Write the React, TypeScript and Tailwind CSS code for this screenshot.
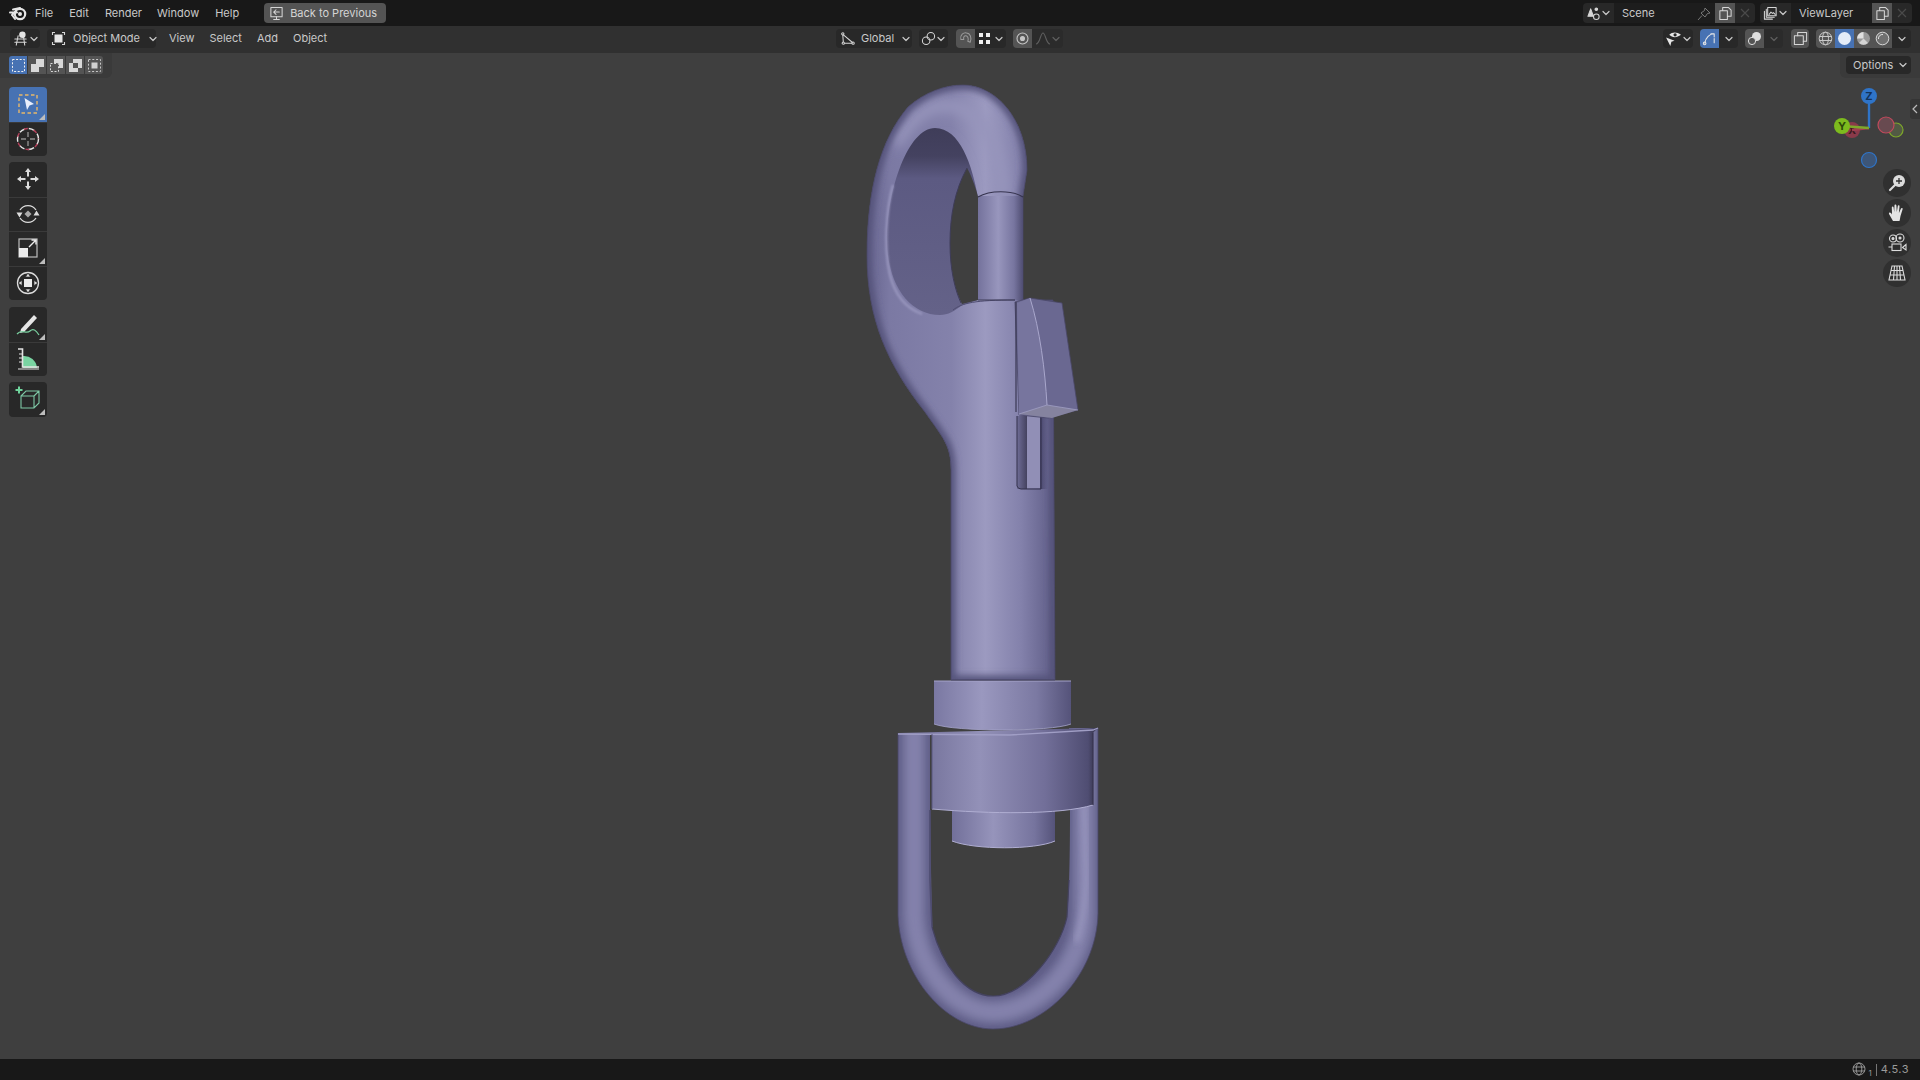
import React from "react";

const Chev = ({ c = "#c8c8c8", className = "" }: { c?: string; className?: string }) => (
  <svg width="10" height="10" viewBox="0 0 10 10" className={className}>
    <path d="M2 3.5 L5 6.5 L8 3.5" fill="none" stroke={c} strokeWidth="1.2" strokeLinecap="round" strokeLinejoin="round" />
  </svg>
);

const Corner = () => (
  <svg width="6" height="6" viewBox="0 0 6 6" className="absolute right-[2px] bottom-[2px]">
    <path d="M6 0 V6 H0 Z" fill="#bdbdbd" />
  </svg>
);

const Ico = ({ children, s = 18, v = 18 }: { children: React.ReactNode; s?: number; v?: number }) => (
  <svg width={s} height={s} viewBox={`0 0 ${v} ${v}`} fill="none" stroke="#d6d6d6" strokeWidth="1.1" strokeLinecap="round" strokeLinejoin="round">
    {children}
  </svg>
);

const Menu = ({ t, className = "" }: { t: string; className?: string }) => (
  <span className={`text-[#c9c9c9] whitespace-nowrap ${className}`}>{t}</span>
);

const ToolBtn = ({ children, active, corner, top, bottom }: { children: React.ReactNode; active?: boolean; corner?: boolean; top?: boolean; bottom?: boolean }) => (
  <div className={`relative h-[34.5px] w-[38px] pb-px flex items-center justify-center ${active ? "bg-[#4772b3]" : "bg-[#282828]"} ${top ? "rounded-t-[4px]" : "border-t border-[#3a3a3a]"} ${bottom ? "rounded-b-[4px]" : ""}`}>
    {children}
    {corner && <Corner />}
  </div>
);

const NavBtn = ({ children }: { children: React.ReactNode }) => (
  <div className="w-[28px] h-[28px] rounded-full bg-[#303030] flex items-center justify-center">{children}</div>
);

const SelMode = ({ active, children }: { active?: boolean; children: React.ReactNode }) => (
  <div className={`w-[18px] h-[18px] flex items-center justify-center ${active ? "bg-[#4772b3] rounded-l-[3px]" : "bg-[#545454]"}`}>{children}</div>
);

const HOOK =
  "M951 680 L951 470 C951 445 943 438 925 412 C888 365 867 320 867 255 C867 190 880 140 908 107 C925 92 945 85 963 85 C995 85 1027 118 1027 170 L1023 196 L1023 300 L1053 300 L1055 680 Z";
const RING =
  "M898 733 L898 915 C900 975 945 1029 993 1029 C1045 1029 1097 975 1098 913 L1098 728 L1069 728 L1070 810 C1070 870 1069 895 1067 917 C1060 950 1025 996 993 996 C965 996 942 965 932 927 L930 810 L930 733 Z";
const RING_C = "M914 720 L914 915 C916 968 955 1012 993 1012 C1035 1012 1083 968 1084 913 L1084 720";

function Model() {
  return (
    <svg className="absolute inset-0 w-full h-full" viewBox="0 53 1920 1006">
      <defs>
        <linearGradient id="body" gradientUnits="userSpaceOnUse" x1="867" y1="0" x2="1055" y2="0">
          <stop offset="0" stopColor="#66648e" />
          <stop offset="0.12" stopColor="#7b79a3" />
          <stop offset="0.45" stopColor="#8482ab" />
          <stop offset="0.63" stopColor="#9c9ac0" />
          <stop offset="0.82" stopColor="#8381ab" />
          <stop offset="0.96" stopColor="#66648e" />
          <stop offset="1" stopColor="#55537a" />
        </linearGradient>
        <linearGradient id="rod" gradientUnits="userSpaceOnUse" x1="978" y1="0" x2="1023" y2="0">
          <stop offset="0" stopColor="#74729c" />
          <stop offset="0.45" stopColor="#9896bd" />
          <stop offset="0.8" stopColor="#77759f" />
          <stop offset="1" stopColor="#4f4d72" />
        </linearGradient>
        <linearGradient id="inner" gradientUnits="userSpaceOnUse" x1="0" y1="128" x2="0" y2="315">
          <stop offset="0" stopColor="#3f3d59" />
          <stop offset="0.15" stopColor="#444260" />
          <stop offset="0.27" stopColor="#5c5a82" />
          <stop offset="1" stopColor="#646288" />
        </linearGradient>
        <linearGradient id="collar" gradientUnits="userSpaceOnUse" x1="934" y1="0" x2="1071" y2="0">
          <stop offset="0" stopColor="#7a78a2" />
          <stop offset="0.35" stopColor="#9a98bf" />
          <stop offset="0.75" stopColor="#7b79a2" />
          <stop offset="1" stopColor="#55537a" />
        </linearGradient>
        <linearGradient id="plate" gradientUnits="userSpaceOnUse" x1="932" y1="0" x2="1093" y2="0">
          <stop offset="0" stopColor="#79779f" />
          <stop offset="0.3" stopColor="#9391b8" />
          <stop offset="0.7" stopColor="#726f99" />
          <stop offset="0.97" stopColor="#4f4d72" />
          <stop offset="1" stopColor="#3f3d5a" />
        </linearGradient>
        <linearGradient id="lowcyl" gradientUnits="userSpaceOnUse" x1="952" y1="0" x2="1055" y2="0">
          <stop offset="0" stopColor="#72709a" />
          <stop offset="0.4" stopColor="#9694bb" />
          <stop offset="0.8" stopColor="#76749e" />
          <stop offset="1" stopColor="#55537a" />
        </linearGradient>
        <linearGradient id="slotL" gradientUnits="userSpaceOnUse" x1="1017" y1="0" x2="1027" y2="0">
          <stop offset="0" stopColor="#6f6d97" />
          <stop offset="1" stopColor="#44425f" />
        </linearGradient>
        <linearGradient id="slotR" gradientUnits="userSpaceOnUse" x1="1040" y1="0" x2="1048" y2="0">
          <stop offset="0" stopColor="#46446a" />
          <stop offset="1" stopColor="#46446a" stopOpacity="0" />
        </linearGradient>
        <filter id="b3" x="-30%" y="-30%" width="160%" height="160%"><feGaussianBlur stdDeviation="3" /></filter>
        <filter id="b6" x="-30%" y="-30%" width="160%" height="160%"><feGaussianBlur stdDeviation="6" /></filter>
        <filter id="b1" x="-30%" y="-30%" width="160%" height="160%"><feGaussianBlur stdDeviation="1" /></filter>
        <clipPath id="hookClip"><path d={HOOK} /></clipPath>
        <clipPath id="ringClip"><path d={RING} /></clipPath>
      </defs>

      {/* hook and shaft */}
      <path d={HOOK} fill="url(#body)" />
      <g clipPath="url(#hookClip)">
        <path d="M1003 196 C1002 150 985 118 960 108 C935 100 915 112 895 145" fill="none" stroke="#9694bb" strokeWidth="13" filter="url(#b6)" />
        <path d={HOOK} fill="none" stroke="#55537a" strokeWidth="9" filter="url(#b3)" />
        <path d="M951 450 L951 682" fill="none" stroke="#6a6892" strokeWidth="14" filter="url(#b6)" />
      </g>
      <path d={HOOK} fill="none" stroke="#4a4868" strokeWidth="0.8" />

      {/* inside of the eye */}
      <path d="M935 128 C908 128 887 190 887 240 C887 285 910 315 940 315 C948 315 955 311 962 305 L978 300 L978 197 C972 165 960 128 935 128 Z" fill="url(#inner)" />
      <path d="M893 185 C886 210 884 250 890 275 C895 295 905 308 922 314" fill="none" stroke="#a5a3c9" strokeWidth="2.2" opacity="0.75" filter="url(#b1)" />
      <path d="M967 168 C955 190 950 215 950 243 C950 270 955 290 962 304 L978 300 L978 197 C975 185 971 175 967 168 Z" fill="#3f3f3f" />
      <path d="M967 168 C955 190 950 215 950 243 C950 270 955 290 961 303" fill="none" stroke="#3e3c58" strokeWidth="1" />
      <rect x="978" y="196" width="45" height="104" fill="url(#rod)" />
      <path d="M978 197 C990 190 1012 190 1023 197" fill="none" stroke="#35334e" strokeWidth="1.1" />
      <path d="M953 310 C962 303 975 300 1015 300" fill="none" stroke="#4e4c70" strokeWidth="1" />
      <path d="M978 300 L1015 300" stroke="#3e3c58" strokeWidth="1" />

      {/* slot under latch */}
      <rect x="1017" y="416" width="10" height="73" fill="url(#slotL)" />
      <rect x="1027" y="416" width="13" height="72" fill="#918fb6" />
      <rect x="1040" y="416" width="8" height="73" fill="url(#slotR)" />
      <path d="M1017 416 L1017 486 Q1018 489 1021 489 L1041 489 L1041 416" fill="none" stroke="#33314b" strokeWidth="1" />

      {/* latch */}
      <path d="M1015 302 L1030 298 L1062 303 L1078 410 L1048 418 L1019 415 Z" fill="#6a6891" stroke="#4a4868" strokeWidth="0.8" />
      <path d="M1017 303 L1030 298 C1040 330 1045 370 1047 405 L1019 415 Z" fill="#77759e" />
      <path d="M1030 298 C1040 330 1045 370 1047 405" fill="none" stroke="#a9a7cc" strokeWidth="1" />
      <path d="M1019 414 L1047 405 L1078 410 L1052 418 Z" fill="#85839f" />
      <path d="M1019 414 L1047 405 L1078 410" fill="none" stroke="#a09ec4" strokeWidth="0.8" />
      <path d="M1016 302 L1016 412" stroke="#3a3853" strokeWidth="1.2" />

      {/* U ring */}
      <path d={RING} fill="#5f5d87" />
      <g clipPath="url(#ringClip)">
        <path d={RING_C} fill="none" stroke="#716f99" strokeWidth="26" filter="url(#b3)" />
        <path d={RING_C} fill="none" stroke="#8381ab" strokeWidth="15" filter="url(#b3)" />
        <path d="M908 720 L908 905" fill="none" stroke="#a09ec5" strokeWidth="5" filter="url(#b3)" />
        <path d="M1084 800 L1086 880 C1085 905 1082 925 1076 942" fill="none" stroke="#a09ec5" strokeWidth="5" opacity="0.85" filter="url(#b3)" />
      </g>
      <path d="M932 927 C942 965 965 996 993 996 C1025 996 1060 950 1067 917 L1069 880" fill="none" stroke="#44425f" strokeWidth="1.2" />
      <path d="M930 810 L930 880 L932 927" fill="none" stroke="#4e4c70" strokeWidth="1.6" />
      <path d="M898 733 L898 915 C900 975 945 1029 993 1029 C1045 1029 1097 975 1098 913 L1098 728" fill="none" stroke="#4a4868" strokeWidth="0.8" />

      {/* lower cylinder */}
      <path d="M952 808 L1055 808 L1055 841 C1035 850 975 850 952 841 Z" fill="url(#lowcyl)" />
      <path d="M952 841 C975 850 1035 850 1055 841" fill="none" stroke="#b0aed2" strokeWidth="1" />

      {/* plate */}
      <path d="M898 733 L1098 728 C1092 733 1094 733 1093 733 L1093 805 C1060 815 990 814 932 809 L932 734 Z" fill="url(#plate)" />
      <path d="M898 734 L1010 735 L1093 730 L1098 728" fill="none" stroke="#a09ec5" strokeWidth="1.3" />
      <path d="M932 809 C990 814 1060 815 1093 805" fill="none" stroke="#b0aed2" strokeWidth="1" />
      <path d="M932 734 L932 809" stroke="#5a5880" strokeWidth="1" />
      <path d="M1093 733 L1093 805" stroke="#37354f" strokeWidth="1.2" />

      {/* collar */}
      <path d="M934 681 L1071 681 L1071 724 C1050 732 955 732 934 724 Z" fill="url(#collar)" />
      <path d="M934 681 L1071 681" stroke="#a5a3c9" strokeWidth="1" />
      <path d="M934 724 C955 732 1050 732 1071 724" fill="none" stroke="#a5a3c9" strokeWidth="0.8" />
      <path d="M951 680 L1055 680" stroke="#4a4868" strokeWidth="1" />
    </svg>
  );
}

export default function App() {
  return (
    <div className="w-[1920px] h-[1080px] flex flex-col overflow-hidden bg-[#3f3f3f] text-[11px] leading-none" style={{ fontFamily: "Inter, 'Noto Sans', sans-serif" }}>
      {/* Top bar */}
      <div className="h-[26px] shrink-0 bg-[#181818] flex items-center pl-[9px] pr-[8px]">
        <svg width="19" height="16" viewBox="0 0 19 16" className="mr-[7px]">
          <circle cx="11" cy="9" r="5.2" fill="none" stroke="#e6e6e6" strokeWidth="2.2" />
          <circle cx="11" cy="9" r="2" fill="#e6e6e6" />
          <path d="M1 7.5 L8 7.5 M4 4.5 L11 3 M3 10 L7 6 M3.5 10.5 L6 14" stroke="#e6e6e6" strokeWidth="2" strokeLinecap="round" />
        </svg>
        <Menu t="File" className="pt-px" />
        <Menu t="Edit" className="ml-[16px] pt-px" />
        <Menu t="Render" className="ml-[16px] pt-px" />
        <Menu t="Window" className="ml-[15px] pt-px" />
        <Menu t="Help" className="ml-[16px] pt-px" />
        <div className="ml-[25px] h-[20px] w-[122px] bg-[#545454] rounded-[4px] flex items-center pl-[5px] gap-[6px] text-[#d4d4d4]">
          <Ico s={15} v={16}>
            <rect x="2" y="1.5" width="12" height="10" />
            <path d="M5 14.5 H11 M8 11.5 V14.5 M11 6.5 H5 M7.5 4 L5 6.5 L7.5 9" />
          </Ico>
          <span className="whitespace-nowrap pt-px">Back to Previous</span>
        </div>
        <div className="flex-1" />
        {/* Scene */}
        <div className="h-[20px] w-[172px] rounded-[4px] flex overflow-hidden">
          <div className="w-[31px] bg-[#282828] flex items-center justify-center">
            <Ico s={15} v={16}>
              <path d="M5 3 L8 11 H2 Z" fill="#d6d6d6" />
              <circle cx="11" cy="3.5" r="1.4" fill="#d6d6d6" />
              <circle cx="11" cy="11.5" r="3" />
            </Ico>
            <Chev />
          </div>
          <div className="flex-1 bg-[#1d1d1d] flex items-center pl-[8px] pt-px text-[#c9c9c9] relative">
            Scene
            <svg width="14" height="14" viewBox="0 0 14 14" className="absolute right-[4px]" fill="none" stroke="#777" strokeWidth="1">
              <path d="M8 1 L13 6 L10.5 6.5 L8 10 L4 6 L7.5 3.5 Z M5 8.5 L1 13" />
            </svg>
          </div>
          <div className="w-[20px] bg-[#545454] flex items-center justify-center">
            <Ico s={15} v={16}><path d="M5 4 V1.5 H11 L14 4.5 V11 H10 M2 5 H10 V14.5 H2 Z" /></Ico>
          </div>
          <div className="w-[20px] bg-[#282828] flex items-center justify-center">
            <svg width="10" height="10" viewBox="0 0 10 10"><path d="M1 1 L9 9 M9 1 L1 9" stroke="#4a4a4a" strokeWidth="1.2" /></svg>
          </div>
        </div>
        {/* ViewLayer */}
        <div className="ml-[5px] h-[20px] w-[152px] rounded-[4px] flex overflow-hidden">
          <div className="w-[31px] bg-[#282828] flex items-center justify-center">
            <Ico s={15} v={16}>
              <rect x="5" y="1.5" width="9" height="9" />
              <path d="M3.5 3.5 V12 H12 M1.5 5.5 V14 H10 M6.5 9 L8.5 6.5 L10 8 L11 7 L13 9" />
            </Ico>
            <Chev />
          </div>
          <div className="flex-1 bg-[#1d1d1d] flex items-center pl-[8px] pt-px text-[#c9c9c9]">ViewLayer</div>
          <div className="w-[20px] bg-[#545454] flex items-center justify-center">
            <Ico s={15} v={16}><path d="M5 4 V1.5 H11 L14 4.5 V11 H10 M2 5 H10 V14.5 H2 Z" /></Ico>
          </div>
          <div className="w-[20px] bg-[#282828] flex items-center justify-center">
            <svg width="10" height="10" viewBox="0 0 10 10"><path d="M1 1 L9 9 M9 1 L1 9" stroke="#4a4a4a" strokeWidth="1.2" /></svg>
          </div>
        </div>
      </div>

      {/* Header */}
      <div className="h-[27px] shrink-0 bg-[#303030] flex items-start pt-[3px] pl-[10px] pr-[9px] relative">
        <div className="w-[30px] h-[19px] bg-[#282828] rounded-[4px] flex items-center justify-center">
          <Ico s={17} v={18}>
            <path d="M3 9.5 H15 M3 13 H15 M6.5 6 L4.5 16 M12 6 L13.5 16" />
            <circle cx="11" cy="5" r="3.4" fill="#e4e4e4" stroke="none" />
          </Ico>
          <Chev />
        </div>
        <div className="ml-[7px] w-[109px] h-[19px] bg-[#282828] rounded-[4px] flex items-center pl-[4px] text-[#c9c9c9]">
          <svg width="15" height="15" viewBox="0 0 15 15" fill="none" stroke="#d6d6d6" strokeWidth="1.1" className="shrink-0">
            <path d="M1.5 4 V1.5 H4 M11 1.5 H13.5 V4 M13.5 11 V13.5 H11 M4 13.5 H1.5 V11" />
            <rect x="3.5" y="3.5" width="8" height="8" fill="#e6e6e6" stroke="none" />
          </svg>
          <span className="ml-[7px] whitespace-nowrap">Object Mode</span>
          <Chev className="ml-[8px] shrink-0" />
        </div>
        <Menu t="View" className="ml-[13px] mt-[4px]" />
        <Menu t="Select" className="ml-[15px] mt-[4px]" />
        <Menu t="Add" className="ml-[15px] mt-[4px]" />
        <Menu t="Object" className="ml-[15px] mt-[4px]" />

        {/* center group overlays the header's middle */}
        <div className="absolute left-[836px] top-[3px] flex items-center h-[19px]">
          <div className="w-[76px] h-[19px] bg-[#282828] rounded-[4px] flex items-center pl-[4px] text-[#c9c9c9]">
            <Ico s={15} v={16}>
              <circle cx="3" cy="3" r="1.2" />
              <circle cx="3.5" cy="13" r="1.2" />
              <circle cx="14" cy="13" r="1.2" />
              <path d="M3 4.5 L3.5 11.5 M5 13 H12.5 M4 4.5 L13 12" />
            </Ico>
            <span className="ml-[6px]">Global</span>
            <Chev className="ml-[7px]" />
          </div>
          <div className="ml-[7px] w-[29px] h-[19px] bg-[#282828] rounded-[4px] flex items-center justify-center">
            <Ico s={15} v={16}>
              <circle cx="5.5" cy="10.5" r="4" />
              <circle cx="10.5" cy="5.5" r="4" />
            </Ico>
            <Chev />
          </div>
          <div className="ml-[8px] w-[19px] h-[19px] bg-[#545454] rounded-l-[4px] flex items-center justify-center">
            <Ico s={15} v={16}><path d="M3 9 C2 4 6 1.5 9 2 C13 2.5 15 7 13 12 L10.5 11 C11.5 8 10.5 5.5 8.5 5 C6.5 4.8 5.5 7 6.2 9 Z" stroke="#9a9a9a" /></Ico>
          </div>
          <div className="w-[31px] h-[19px] bg-[#282828] rounded-r-[4px] flex items-center pl-[2px] gap-[2px]">
            <svg width="15" height="15" viewBox="0 0 15 15" fill="#f0f0f0">
              <rect x="2" y="2" width="4" height="4" /><rect x="9" y="2" width="4" height="4" />
              <rect x="2" y="9" width="4" height="4" /><rect x="9" y="9" width="4" height="4" />
            </svg>
            <Chev />
          </div>
          <div className="ml-[7px] w-[19px] h-[19px] bg-[#545454] rounded-l-[4px] flex items-center justify-center">
            <svg width="15" height="15" viewBox="0 0 15 15" fill="none" stroke="#c4c4c4" strokeWidth="1.1">
              <circle cx="7.5" cy="7.5" r="5.5" /><circle cx="7.5" cy="7.5" r="2" fill="#c4c4c4" />
            </svg>
          </div>
          <div className="w-[31px] h-[19px] bg-[#2b2b2b] rounded-r-[4px] flex items-center pl-[3px]">
            <svg width="16" height="15" viewBox="0 0 16 15" fill="none" stroke="#5e5e5e" strokeWidth="1.1">
              <path d="M1 13 C5 13 5.5 2 8 2 C10.5 2 11 13 15 13" />
            </svg>
            <Chev c="#5e5e5e" />
          </div>
        </div>

        <div className="flex-1" />
        <div className="w-[30px] h-[19px] bg-[#282828] rounded-[4px] flex items-center justify-center">
          <svg width="17" height="17" viewBox="0 0 16 16">
            <path d="M4 4.5 C7 1.5 11 1.5 15 4.5 C11 7.5 7 7.5 4 4.5 Z" fill="#e6e6e6" />
            <circle cx="9.5" cy="4.5" r="1.5" fill="#282828" />
            <path d="M1 7 L9 10 L6 11 L5 15 Z" fill="#e6e6e6" />
          </svg>
          <Chev />
        </div>
        <div className="ml-[7px] flex h-[19px] w-[38px] rounded-[4px] overflow-hidden">
          <div className="w-[19px] bg-[#4772b3] flex items-center justify-center">
            <Ico s={15} v={16}>
              <path d="M3 13 C4 7 8 3 13 3 M13 3 H9.5 M13 3 V6.5 M13 8 V12.5" stroke="#e8e8e8" />
              <circle cx="2.8" cy="13.2" r="1.4" stroke="#e8e8e8" />
            </Ico>
          </div>
          <div className="flex-1 bg-[#282828] flex items-center justify-center"><Chev /></div>
        </div>
        <div className="ml-[7px] flex h-[19px] w-[38px] rounded-[4px] overflow-hidden">
          <div className="w-[19px] bg-[#545454] flex items-center justify-center">
            <svg width="15" height="15" viewBox="0 0 15 15">
              <circle cx="9.5" cy="5.5" r="4.5" fill="#e0e0e0" />
              <circle cx="5" cy="10" r="3.6" fill="#545454" stroke="#e0e0e0" strokeWidth="1" />
            </svg>
          </div>
          <div className="flex-1 bg-[#2b2b2b] flex items-center justify-center"><Chev c="#5e5e5e" /></div>
        </div>
        <div className="ml-[8px] w-[18px] h-[19px] bg-[#545454] rounded-[4px] flex items-center justify-center">
          <Ico s={15} v={16}>
            <rect x="1.5" y="5" width="9.5" height="9.5" fill="#545454" />
            <path d="M5 5 V1.5 H14.5 V11 H11" />
          </Ico>
        </div>
        <div className="ml-[7px] h-[19px] w-[95px] rounded-[4px] overflow-hidden flex">
          <div className="w-[19px] bg-[#545454] flex items-center justify-center">
            <svg width="15" height="15" viewBox="0 0 15 15" fill="none" stroke="#c8c8c8" strokeWidth="1">
              <circle cx="7.5" cy="7.5" r="6.3" /><ellipse cx="7.5" cy="7.5" rx="3" ry="6.3" /><path d="M1.2 5.5 H13.8 M1.2 9.5 H13.8" />
            </svg>
          </div>
          <div className="w-[19px] bg-[#4772b3] flex items-center justify-center">
            <svg width="15" height="15" viewBox="0 0 15 15"><circle cx="7.5" cy="7.5" r="6.5" fill="#e4ecf8" /></svg>
          </div>
          <div className="w-[19px] bg-[#545454] flex items-center justify-center">
            <svg width="15" height="15" viewBox="0 0 15 15">
              <circle cx="7.5" cy="7.5" r="6.5" fill="#9a9a9a" />
              <path d="M7.5 1 A6.5 6.5 0 0 0 1 7.5 H7.5 Z" fill="#e0e0e0" />
              <path d="M7.5 7.5 L12 12 A6.5 6.5 0 0 1 3 12 Z" fill="#d4d4d4" />
            </svg>
          </div>
          <div className="w-[19px] bg-[#545454] flex items-center justify-center">
            <svg width="15" height="15" viewBox="0 0 15 15" fill="none">
              <circle cx="7.5" cy="7.5" r="6.3" stroke="#d8d8d8" strokeWidth="1" fill="#707070" />
              <path d="M3.5 8 A4 4 0 0 1 8 3.5" stroke="#e6e6e6" strokeWidth="1" />
            </svg>
          </div>
          <div className="flex-1 bg-[#282828] flex items-center justify-center"><Chev /></div>
        </div>
      </div>

      {/* Viewport */}
      <div className="flex-1 relative bg-[#3f3f3f]">
        <Model />

        {/* Tool settings strip */}
        <div className="absolute left-0 top-0 w-[112px] h-[25px] bg-[#3a3a3a] rounded-br-[6px]" />
        <div className="absolute right-0 top-0 w-[80px] h-[25px] bg-[#3a3a3a] rounded-bl-[6px]" />
        <div className="absolute left-[9px] top-[3px] flex gap-px">
          <SelMode active>
            <svg width="15" height="15" viewBox="0 0 15 15"><rect x="1.5" y="1.5" width="12" height="12" fill="none" stroke="#f0f0f0" strokeDasharray="2 1.6" /></svg>
          </SelMode>
          <SelMode>
            <svg width="15" height="15" viewBox="0 0 15 15"><path d="M1 6 H6 V1 H14 V9 H9 V14 H1 Z" fill="#d8d8d8" /></svg>
          </SelMode>
          <SelMode>
            <svg width="15" height="15" viewBox="0 0 15 15"><path d="M5 1 H14 V10 H10 V5 H5 Z" fill="#d8d8d8" /><rect x="1.5" y="5.5" width="8" height="8" fill="none" stroke="#d8d8d8" strokeDasharray="2 1.6" /></svg>
          </SelMode>
          <SelMode>
            <svg width="15" height="15" viewBox="0 0 15 15"><path d="M5 1 H14 V10 H10 V5 H5 Z" fill="#d8d8d8" /><path d="M1 5 H10 V14 H1 Z M5 8 V10 H6 V8 Z" fill="#d8d8d8" /><rect x="5" y="5" width="5" height="5" fill="#545454" /></svg>
          </SelMode>
          <div className="w-[18px] h-[18px] bg-[#545454] rounded-r-[3px] flex items-center justify-center">
            <svg width="15" height="15" viewBox="0 0 15 15"><rect x="1.5" y="1.5" width="12" height="12" fill="none" stroke="#c8c8c8" strokeDasharray="2 1.8" /><rect x="4.5" y="4.5" width="6" height="6" fill="#d0d0d0" /></svg>
          </div>
        </div>
        <div className="absolute right-[9px] top-[3px] w-[65px] h-[18px] bg-[#282828] rounded-[4px] flex items-center pl-[7px] text-[#c9c9c9] gap-[5px]">
          <span className="pt-px">Options</span>
          <Chev />
        </div>

        {/* Toolbar */}
        <div className="absolute left-[9px] top-[34px] flex flex-col">
          <div className="flex flex-col">
            <ToolBtn active top corner>
              <svg width="26" height="26" viewBox="0 0 26 26">
                <rect x="4" y="4" width="18" height="18" fill="none" stroke="#e8b86a" strokeWidth="1.4" strokeDasharray="3.5 2.5" />
                <path d="M9.5 7 L19 13 L14.5 14.5 L12 19 Z" fill="#e8eefc" />
              </svg>
            </ToolBtn>
            <ToolBtn bottom>
              <svg width="26" height="26" viewBox="0 0 26 26" fill="none">
                <circle cx="13" cy="13" r="10.5" stroke="#e6e6e6" strokeWidth="1.4" strokeDasharray="6 4" />
                <circle cx="13" cy="13" r="10.5" stroke="#b4405a" strokeWidth="1.4" strokeDasharray="4 6" strokeDashoffset="5" />
                <path d="M13 6 V11 M13 15 V20 M6 13 H11 M15 13 H20" stroke="#8e8e8e" strokeWidth="1.4" />
              </svg>
            </ToolBtn>
          </div>
          <div className="flex flex-col mt-[6px]">
            <ToolBtn top>
              <svg width="26" height="26" viewBox="0 0 26 26" fill="#dcdcdc">
                <path d="M13 2 L16 6 H14 V10.5 H12 V6 H10 Z M13 24 L10 20 H12 V15.5 H14 V20 H16 Z M2 13 L6 10 V12 H10.5 V14 H6 V16 Z M24 13 L20 16 V14 H15.5 V12 H20 V10 Z" />
              </svg>
            </ToolBtn>
            <ToolBtn>
              <svg width="26" height="26" viewBox="0 0 26 26" fill="none">
                <path d="M5 9 A9.5 9.5 0 0 1 21 9 M5 17 A9.5 9.5 0 0 0 21 17" stroke="#dcdcdc" strokeWidth="1.3" />
                <rect x="10.5" y="10.5" width="5" height="5" fill="#aaa" transform="rotate(45 13 13)" />
                <path d="M1.5 11.5 H7.5 L4.5 16.5 Z M18.5 14.5 H24.5 L21.5 9.5 Z" fill="#dcdcdc" />
              </svg>
            </ToolBtn>
            <ToolBtn corner>
              <svg width="26" height="26" viewBox="0 0 26 26" fill="none">
                <rect x="4" y="4" width="18" height="18" stroke="#bdbdbd" strokeWidth="1.2" />
                <rect x="4" y="13" width="9" height="9" fill="#ececec" />
                <path d="M14 12 L21 5 M16.5 5 H21 V9.5" stroke="#ececec" strokeWidth="1.4" />
              </svg>
            </ToolBtn>
            <ToolBtn bottom>
              <svg width="26" height="26" viewBox="0 0 26 26" fill="none">
                <circle cx="13" cy="13" r="10.5" stroke="#dcdcdc" strokeWidth="1.3" />
                <rect x="9" y="9" width="8" height="8" fill="#ececec" />
                <path d="M13 3 L15.5 7 H10.5 Z M13 23 L15.5 19 H10.5 Z M3 13 L7 10.5 V15.5 Z M23 13 L19 10.5 V15.5 Z" fill="#dcdcdc" stroke="#282828" strokeWidth="0.6" />
              </svg>
            </ToolBtn>
          </div>
          <div className="flex flex-col mt-[7px]">
            <ToolBtn top corner>
              <svg width="26" height="26" viewBox="0 0 26 26" fill="none">
                <path d="M6 18 L5 22 L9 21 L22 7 L19 4 Z" fill="#e6e6e6" />
                <path d="M2 23 C7 17 11 24 15 20 C18 17 21 19 24 24" stroke="#7ad0a0" strokeWidth="1.2" />
              </svg>
            </ToolBtn>
            <ToolBtn bottom>
              <svg width="26" height="26" viewBox="0 0 26 26" fill="none">
                <path d="M8 22 V10 A13 13 0 0 1 22 22 Z" fill="#79d4a2" />
                <path d="M3 3 H7.5 V21 H24" stroke="#e4e4e4" strokeWidth="1.6" />
                <path d="M3 23 H24 M7 8 H4 M7 12 H4 M7 16 H4" stroke="#e4e4e4" strokeWidth="1.2" />
              </svg>
            </ToolBtn>
          </div>
          <div className="mt-[6px]">
            <ToolBtn top bottom corner>
              <svg width="28" height="28" viewBox="0 0 28 28" fill="none">
                <path d="M7 11 L12 6 H25 V18 L20 23 H7 Z M7 11 H20 V23 M20 11 L25 6" stroke="#7ec9a6" strokeWidth="1.1" />
                <path d="M5 1.5 V8.5 M1.5 5 H8.5" stroke="#6fd49c" strokeWidth="2" />
              </svg>
            </ToolBtn>
          </div>
        </div>

        {/* Orientation gizmo */}
        <svg className="absolute left-[1830px] top-[30px]" width="80" height="90" viewBox="1830 83 80 90">
          <circle cx="1852" cy="130" r="8" fill="#8a3a4a" />
          <text x="1852" y="134" fontSize="11" fontWeight="700" textAnchor="middle" fill="#3a1a20" fontFamily="Inter">X</text>
          <path d="M1869 96 V128" stroke="#2f74c8" strokeWidth="2.4" />
          <path d="M1869 128 L1852 130" stroke="#a04050" strokeWidth="2.4" />
          <path d="M1869 128 L1842 126" stroke="#7ea82a" strokeWidth="2.4" />
          <circle cx="1869" cy="96" r="8" fill="#2f74c8" />
          <text x="1869" y="100" fontSize="11" fontWeight="700" textAnchor="middle" fill="#12325a" fontFamily="Inter">Z</text>
          <circle cx="1842" cy="126" r="8" fill="#7dbb1e" />
          <text x="1842" y="130" fontSize="11" fontWeight="700" textAnchor="middle" fill="#2c4a0a" fontFamily="Inter">Y</text>
          <circle cx="1896" cy="130" r="7" fill="#525a44" stroke="#7ea82a" strokeWidth="1.2" />
          <circle cx="1886" cy="125" r="8" fill="#684a50" stroke="#c04a5c" strokeWidth="1.2" />
          <circle cx="1869" cy="160" r="7.5" fill="#3d5678" stroke="#2f74c8" strokeWidth="1.2" />
        </svg>
        {/* sidebar arrow */}
        <div className="absolute right-0 top-[46px] w-[10px] h-[20px] bg-[#353535] rounded-l-[3px] flex items-center justify-center">
          <svg width="8" height="12" viewBox="0 0 8 12"><path d="M6 2 L2 6 L6 10" fill="none" stroke="#bbb" strokeWidth="1.2" /></svg>
        </div>
        {/* Nav buttons */}
        <div className="absolute left-[1883px] top-[116px] flex flex-col gap-[2px]">
          <NavBtn>
            <svg width="20" height="20" viewBox="0 0 20 20" fill="none">
              <circle cx="12" cy="8" r="6" fill="#dcdcdc" />
              <path d="M12 5 V11 M9 8 H15" stroke="#303030" strokeWidth="1.3" />
              <path d="M8 12 L3 17" stroke="#dcdcdc" strokeWidth="2.2" strokeLinecap="round" />
            </svg>
          </NavBtn>
          <NavBtn>
            <svg width="20" height="20" viewBox="0 0 20 20" fill="#e4e4e4">
              <path d="M6 18 L2 11 C1.5 9.5 3 9 4 10 L5 11.5 L4.8 4.5 C4.8 3.2 6.5 3.2 6.6 4.5 L7.2 9 L7.5 2.5 C7.5 1.2 9.3 1.2 9.4 2.5 L9.8 9 L10.8 3 C11 1.8 12.7 2.1 12.5 3.4 L11.9 10 L14 5.5 C14.5 4.4 16 5 15.6 6.2 L13.5 13 C13 15 13 16.5 12.5 18 Z" />
            </svg>
          </NavBtn>
          <NavBtn>
            <svg width="20" height="20" viewBox="0 0 20 20" fill="none" stroke="#dcdcdc" strokeWidth="1.1">
              <circle cx="6" cy="5.5" r="3.5" /><circle cx="13" cy="5" r="4" />
              <circle cx="6" cy="5.5" r="1" fill="#dcdcdc" /><circle cx="13" cy="5" r="1" fill="#dcdcdc" />
              <rect x="5" y="11" width="9" height="6.5" />
              <path d="M5 14 H1.5 M19 11.5 L15.5 14.5 L19 17 Z" />
            </svg>
          </NavBtn>
          <NavBtn>
            <svg width="20" height="20" viewBox="0 0 20 20" fill="none" stroke="#dcdcdc" strokeWidth="1.1">
              <path d="M5 3 H15 L18 17 H2 Z M10 3 V17 M4 7.5 H16 M3 12 H17 M7.5 3 L6.5 17 M12.5 3 L13.5 17" />
            </svg>
          </NavBtn>
        </div>
      </div>

      {/* Status bar */}
      <div className="h-[21px] shrink-0 bg-[#181818] flex items-center justify-end pr-[11px] text-[#9a9a9a] text-[11px]">
        <svg width="17" height="16" viewBox="0 0 17 16" fill="none" stroke="#a0a0a0" strokeWidth="0.9">
          <circle cx="7" cy="7" r="6" /><ellipse cx="7" cy="7" rx="2.8" ry="6" /><path d="M1 5 H13 M1 9 H13" />
        </svg>
        <span className="text-[8px] ml-[-1px] self-end mb-[3px]">1</span>
        <span className="ml-[4px] w-px h-[12px] bg-[#777]" />
        <span className="ml-[4px] tracking-[0.5px]">4.5.3</span>
      </div>
    </div>
  );
}
